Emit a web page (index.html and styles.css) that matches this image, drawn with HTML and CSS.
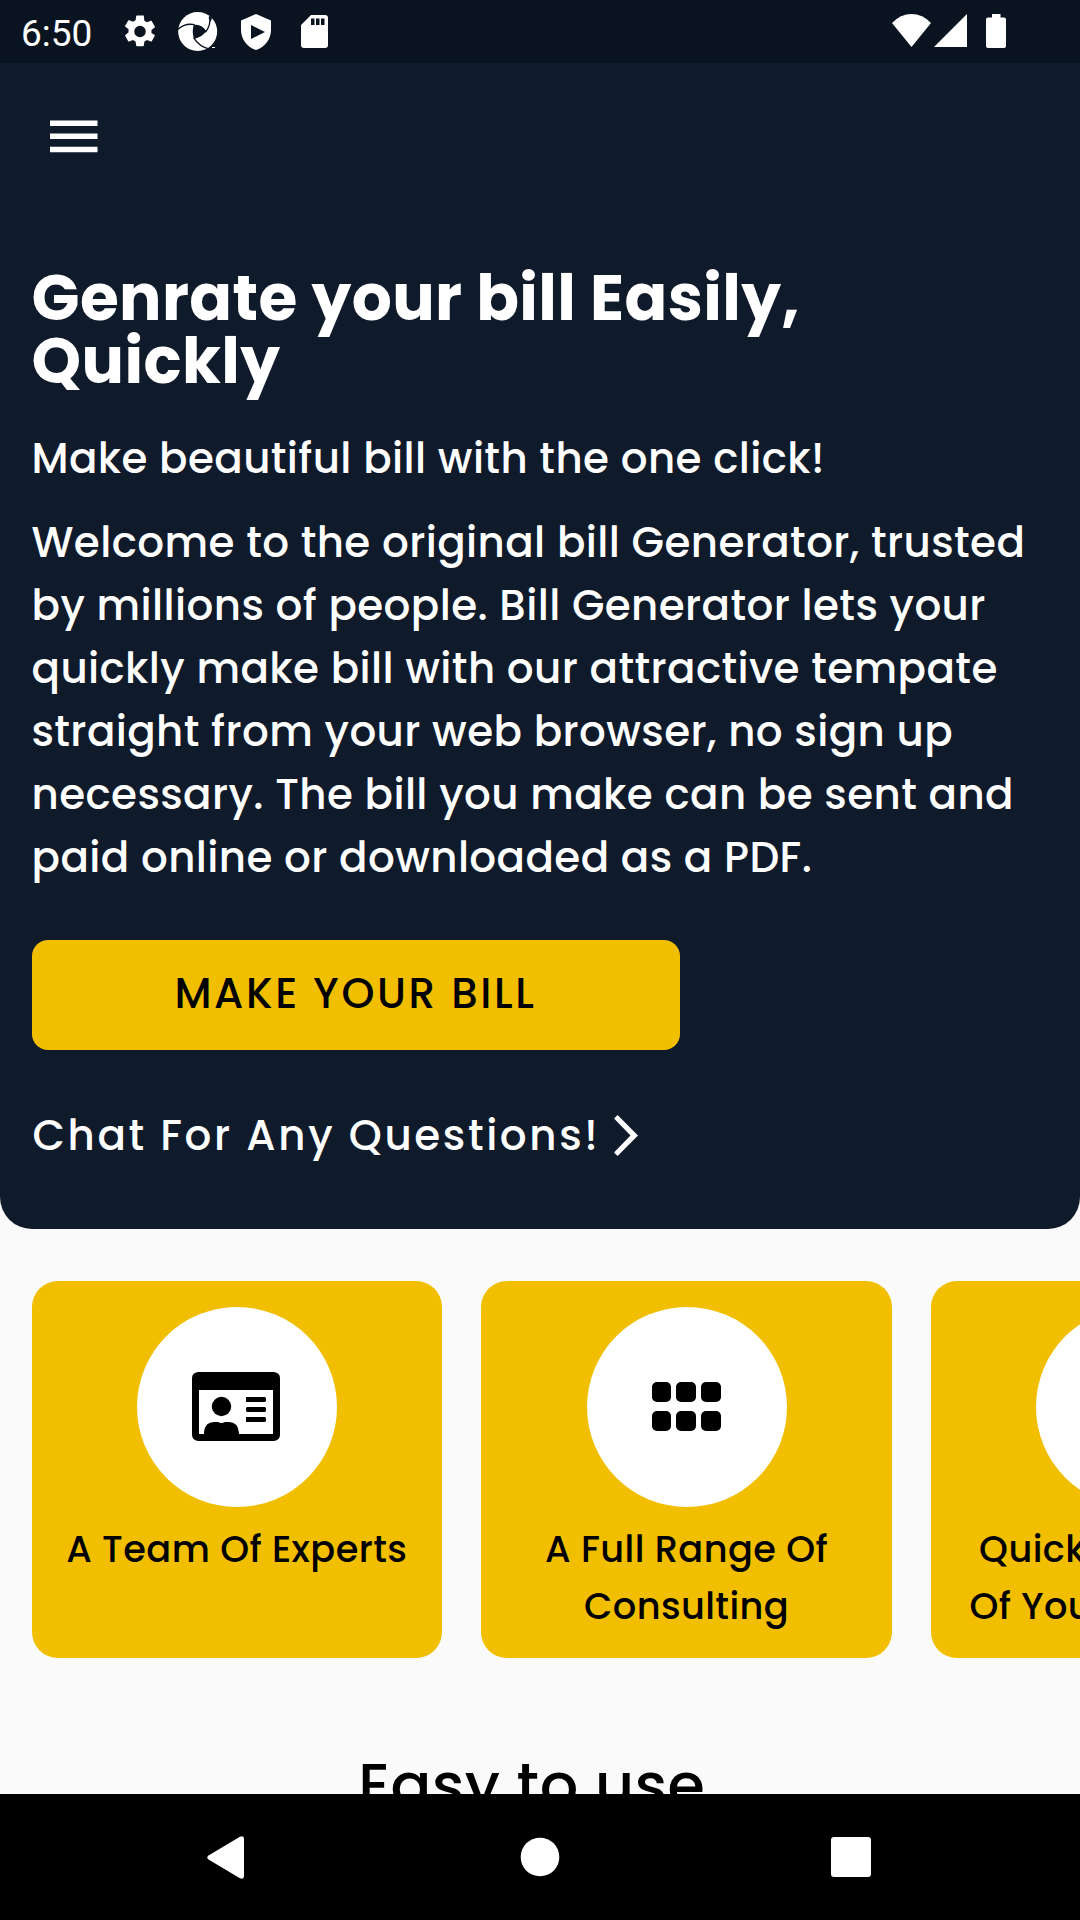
FILE: index.html
```html
<!DOCTYPE html>
<html lang="en">
<head>
<meta charset="utf-8">
<title>Bill Generator</title>
<link rel="stylesheet" href="styles.css">
</head>
<body>
<div class="screen">
  <header class="status">
    <span class="clock">6:50</span>
    <svg class="ic-gear" viewBox="2 2 20 20"><path fill="#fff" fill-rule="evenodd" d="M19.14 12.94c.04-.3.06-.61.06-.94s-.02-.64-.07-.94l2.03-1.58c.18-.14.23-.41.12-.61l-1.92-3.32c-.12-.22-.37-.29-.59-.22l-2.39.96c-.5-.38-1.03-.7-1.62-.94l-.36-2.54A.484.484 0 0 0 13.92 2h-3.84c-.24 0-.43.17-.47.41l-.36 2.54c-.59.24-1.13.57-1.62.94l-2.39-.96c-.22-.08-.47 0-.59.22L2.74 8.47c-.12.21-.08.47.12.61l2.03 1.58c-.05.3-.09.63-.09.94s.02.64.07.94l-2.03 1.58c-.18.14-.23.41-.12.61l1.92 3.32c.12.22.37.29.59.22l2.39-.96c.5.38 1.03.7 1.62.94l.36 2.54c.05.24.24.41.48.41h3.84c.24 0 .44-.17.47-.41l.36-2.54c.59-.24 1.13-.56 1.62-.94l2.39.96c.22.08.47 0 .59-.22l1.92-3.32c.12-.22.07-.47-.12-.61zM12 15.6A3.6 3.6 0 1 1 12 8.4a3.6 3.6 0 0 1 0 7.2z"/></svg>
    <svg class="ic-aperture" viewBox="24 36 120 117"><circle cx="83" cy="94.500" r="58.500" fill="#fff"/><g fill="none" stroke="#0a1320" stroke-width="4"><path d="M22 89Q45 68 74 74M118 50Q124 75 106 97M71 113Q88 142 122 148"/></g><path fill="#0a1320" d="M71 75Q92 70 109 93Q96 112 72 117Q65 95 71 75ZM117 47l9 6-4 14zM98 153l18-6 10 3-14 9z"/><path fill="#fff" d="M126 141h9v3h-9z"/></svg>
    <svg class="ic-shield" viewBox="0 0 30 36"><path fill="#fff" fill-rule="evenodd" d="M15 0L30 6.500V16C30 25 24 33 15 36C6 33 0 25 0 16V6.500ZM10 11V25L24 18Z"/></svg>
    <svg class="ic-sd" viewBox="0 0 27 33"><path fill="#fff" fill-rule="evenodd" d="M10 0H24Q27 0 27 3V30Q27 33 24 33H3Q0 33 0 30V10ZM10 3.500V10H13.500V3.500ZM15 3.500V10H18.500V3.500ZM20 3.500V10H23.500V3.500Z"/></svg>
    <svg class="ic-wifi" viewBox="0 0 39 33"><path fill="#fff" d="M19.500 33L0 9Q8.500 0 19.500 0T39 9Z"/></svg>
    <svg class="ic-signal" viewBox="0 0 33 33"><path fill="#fff" d="M33 0V33H0Z"/></svg>
    <svg class="ic-battery" viewBox="0 0 20 34"><path fill="#fff" d="M6 0H14.500V3.500H18Q20 3.500 20 5.500V32Q20 34 18 34H2Q0 34 0 32V5.500Q0 3.500 2 3.500H6Z"/></svg>
  </header>
  <section class="hero">
    <svg class="menu" viewBox="0 0 48 33"><path fill="#fff" d="M0 .5h47.500V6H0zM0 13.500h47.500V19H0zM0 26.800h47.500v5.500H0z"/></svg>
    <h1 class="title">Genrate your bill Easily,<br>Quickly</h1>
    <p class="lead">Make beautiful bill with the one click!</p>
    <p class="intro">Welcome to the original bill Generator, trusted<br>by millions of people. Bill Generator lets your<br>quickly make bill with our attractive tempate<br>straight from your web browser, no sign up<br>necessary. The bill you make can be sent and<br>paid online or downloaded as a PDF.</p>
    <button class="cta">MAKE YOUR BILL</button>
    <a class="chat">Chat For Any Questions!<svg class="chevron" viewBox="0 0 24 41"><path fill="#fff" d="M3.600 0L24 20.500L3.600 41L0 37.400L16.500 20.500L0 3.600Z"/></svg></a>
  </section>
  <main class="content">
    <div class="cards">
      <article class="card">
        <div class="disc"><svg class="id-card" viewBox="0 0 88 69"><path fill="#000" fill-rule="evenodd" d="M6 0H82Q88 1 88 6V63Q88 68 82 69H6Q0 68 0 63V6Q0 1 6 0ZM7 18V62H12V60Q13 50 22 50H26Q29.500 52 33 50H37Q46 50 47 61V62H81V18Z"/><circle cx="29.500" cy="34.500" r="9.700"/><path d="M54 25h19l1 1v3l-1 1H54zM54 36l1-1h18l1 1v3l-1 1H55l-1-1zM54 45h19l1 1v3l-1 1H54z"/></svg></div>
        <p class="label">A Team Of Experts</p>
      </article>
      <article class="card">
        <div class="disc"><svg class="grid" viewBox="0 0 69 49"><rect width="19" height="20" rx="5"/><rect x="24" width="20" height="20" rx="5"/><rect x="49" width="20" height="20" rx="5"/><rect y="29" width="19" height="20" rx="5"/><rect x="24" y="29" width="20" height="20" rx="5"/><rect x="49" y="29" width="20" height="20" rx="5"/></svg></div>
        <p class="label">A Full Range Of<br>Consulting</p>
      </article>
      <article class="card">
        <div class="disc"></div>
        <p class="label label-start"><span class="inset">Quick</span><br>Of Your</p>
      </article>
    </div>
    <h2 class="section-title">Easy to use</h2>
  </main>
  <nav class="navbar">
    <svg class="nav-back" viewBox="0 0 37 43"><path fill="#fff" d="M1.500 19.500L32.500 1Q37 -1 37 3V40Q37 44 32.500 42L1.500 23.500Q-1 21.500 1.500 19.500Z"/></svg>
    <svg class="nav-home" viewBox="0 0 40 40"><circle cx="20" cy="20" r="19.300" fill="#fff"/></svg>
    <svg class="nav-recent" viewBox="0 0 40 40"><rect width="40" height="40" rx="3" fill="#fff"/></svg>
  </nav>
</div>
</body>
</html>
```
FILE: styles.css
```css
* { box-sizing: border-box; margin: 0; padding: 0; }

body {
  background: #fafafa;
  color: #000;
  font-family: Poppins, Inter, sans-serif;
  font-weight: 500;
  letter-spacing: 0.4px;
}

svg { display: block; flex: none; overflow: visible; }

.screen {
  display: flex;
  flex-direction: column;
  width: 1080px;
  height: 1920px;
  overflow: hidden;
}

.status {
  display: flex;
  flex: none;
  align-items: flex-start;
  height: 63px;
  padding-left: 21px;
  background: #0a1320;
}

.clock {
  width: 103px;
  padding-top: 12px;
  color: #fff;
  font: 400 37px/43px Roboto, sans-serif;
  letter-spacing: 0;
}

.ic-gear { width: 32px; height: 33px; margin-top: 15px; }
.ic-aperture { width: 40px; height: 39px; margin: 12px 0 0 22px; }
.ic-shield { width: 30px; height: 36px; margin: 14px 0 0 23px; }
.ic-sd { width: 27px; height: 33px; margin: 15px 0 0 30px; }
.ic-wifi { width: 39px; height: 33px; margin: 14px 3px 0 auto; }
.ic-signal { width: 33px; height: 33px; margin: 14px 19px 0 0; }
.ic-battery { width: 20px; height: 34px; margin: 14px 74px 0 0; }

.hero {
  display: flex;
  flex: none;
  flex-direction: column;
  align-items: flex-start;
  height: 1165.5px;
  padding: 57px 31.5px 0;
  border-radius: 0 0 32px 32px;
  background: #0f1a2b;
  color: #fff;
}

.menu { width: 48px; height: 33px; margin: 0 0 113.5px 18px; }
.title { font-size: 63px; font-weight: 700; line-height: 63px; white-space: nowrap; }
.lead, .intro { font-size: 42px; font-weight: 500; line-height: 63px; white-space: nowrap; }
.lead { margin-top: 34px; }
.intro { margin-top: 21px; }

.cta {
  width: 648px;
  height: 110.5px;
  margin-top: 51px;
  padding-bottom: 2px;
  border: 0;
  border-radius: 16px;
  background: #f1bf00;
  color: #000;
  font: inherit;
  font-size: 42px;
  letter-spacing: 2.625px;
}

.chat {
  display: flex;
  align-items: center;
  margin-top: 54px;
  padding-left: 1px;
  font-size: 42px;
  line-height: 63px;
  letter-spacing: 2.625px;
}

.chevron { width: 24px; height: 41px; margin-left: 14px; }

.content { flex: 1; min-height: 0; overflow: hidden; }

.cards {
  display: flex;
  gap: 39.3px;
  padding: 52.5px 0 0 31.5px;
}

.card {
  flex: none;
  width: 410.5px;
  height: 376.5px;
  padding-top: 26px;
  border-radius: 26px;
  background: #f1bf00;
}

.disc {
  display: flex;
  align-items: center;
  justify-content: center;
  width: 200px;
  height: 200px;
  margin: 0 auto;
  border-radius: 50%;
  background: #fff;
}

.id-card { width: 88px; height: 69px; margin: 0 2px 2px 0; }
.grid { width: 69px; height: 49px; margin: 0 1px 2px 0; }

.label {
  margin-top: 13.5px;
  font-size: 36.75px;
  line-height: 57px;
  text-align: center;
}

.label-start { padding-left: 38.5px; text-align: left; }
.inset { padding-left: 9.500px; }

.section-title {
  margin-top: 85px;
  padding-right: 16.5px;
  font-size: 60.375px;
  font-weight: 500;
  letter-spacing: 0.55px;
  line-height: 84px;
  text-align: center;
}

.navbar {
  display: flex;
  flex: none;
  align-items: center;
  height: 126px;
  padding-left: 207px;
  background: #000;
}

.nav-back { width: 37px; height: 43px; }
.nav-home { width: 40px; height: 40px; margin-left: 276px; }
.nav-recent { width: 40px; height: 40px; margin-left: 271px; }
```
